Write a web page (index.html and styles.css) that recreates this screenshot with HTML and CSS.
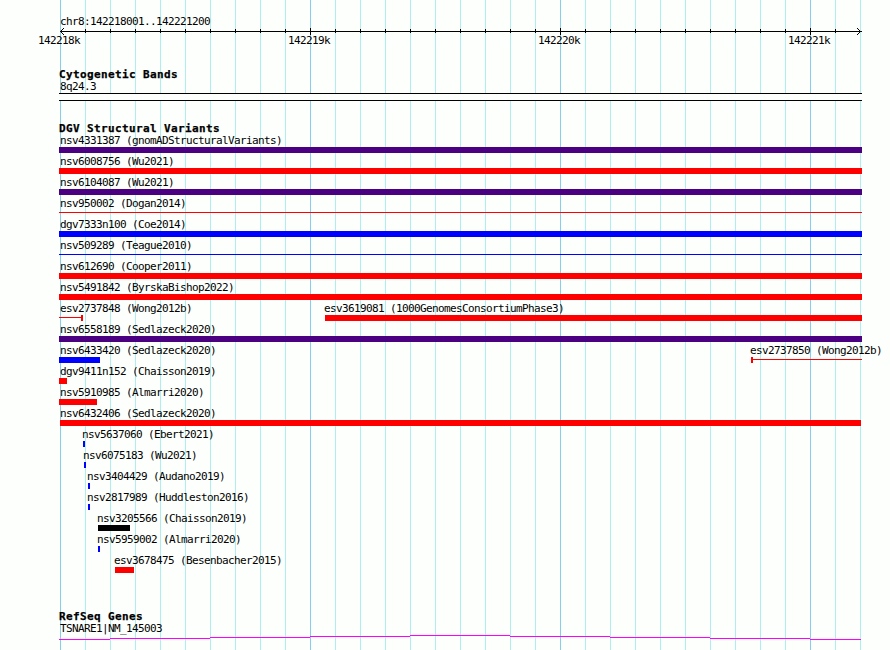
FILE: index.html
```
<!DOCTYPE html>
<html lang="en">
<head>
<meta charset="utf-8">
<title>chr8:142218001..142221200</title>
<link rel="stylesheet" href="styles.css">
</head>
<body>
<main class="browser">
  <section class="ruler">
    <h1 class="region">chr8:142218001..142221200</h1>
    <svg class="axis" id="axis" width="803" height="7" shape-rendering="crispEdges" aria-hidden="true"></svg>
    <div class="scale"><span>142218k</span><span>142219k</span><span>142220k</span><span>142221k</span></div>
  </section>
  <section class="cyto">
    <h2>Cytogenetic Bands</h2>
    <p class="label">8q24.3</p>
    <div class="band"></div>
  </section>
  <section class="variants">
    <h2>DGV Structural Variants</h2>
    <div id="rows"></div>
  </section>
  <section class="genes">
    <h2>RefSeq Genes</h2>
    <p class="label">TSNARE1|NM_145003</p>
    <svg class="gene" width="803" height="5" shape-rendering="crispEdges" aria-hidden="true">
      <path fill="#f0f" d="M0 4h51v1H0zM51 3h100v1H51zM151 2h100v1H151zM251 1h100v1H251zM351 0h100v1H351zM451 1h100v1H451zM551 2h100v1H551zM651 3h100v1H651zM751 4h51v1H751z"/>
    </svg>
  </section>
</main>
<script src="tracks.js"></script>
</body>
</html>
```
FILE: styles.css
```
* { box-sizing: border-box; }
body {
  margin: 0;
  overflow: hidden;
  background: #fdfffc;
  color: #000;
  font: 11px/12px "DejaVu Sans Mono", monospace;
  letter-spacing: -0.622px;
}
.browser {
  width: 801px;
  height: 650px;
  margin-left: 60px;
  padding-top: 16px;
  background:
    linear-gradient(to right, #87ceeb 1px, transparent 1px) 0 0 / 250px 100%,
    linear-gradient(to right, #afeeee 1px, transparent 1px) 0 0 / 25px 100%;
}
section { margin-left: -1px; }
h1, h2, p { margin: 0; font-size: 11px; line-height: 12px; white-space: nowrap; }
h1 { font-weight: 400; padding-left: 1px; height: 12px; }
h2 { font-weight: 700; letter-spacing: 0.378px; -webkit-text-stroke: 0.25px #000; }
.label { padding-left: 1px; }
.ruler { height: 53px; }
.axis { display: block; }
.scale { display: flex; gap: 208px; margin-left: -21px; }
.scale span { width: 42px; flex: none; white-space: nowrap; }
.cyto { height: 53px; }
.band {
  width: 803px;
  height: 8px;
  border: solid #000;
  border-width: 1px 0;
  background: #fdfffc;
}
.variants { height: 489px; padding-top: 1px; }
.row { display: grid; height: 21px; }
.feature { grid-area: 1 / 1; }
.name { display: block; height: 12px; white-space: nowrap; }
.name.edge { padding-left: 1px; }
.name.inner { margin-left: -1px; }
.bar { height: 6px; background: currentColor; }
.bar.line { height: 1px; margin-top: 2px; }
.bar.start, .bar.end {
  background: linear-gradient(currentColor, currentColor) 0 2px / 100% 1px no-repeat;
}
.bar.start { border-left: 2px solid; }
.bar.end { border-right: 2px solid; }
.red { color: #f00; }
.blue { color: #00f; }
.indigo { color: #4b0082; }
.black { color: #000; }
.gene { display: block; }
```
FILE: tracks.js
```
// Each row lists features as [name, start, end, colour, shape]
const rows = [
  [["nsv4331387 (gnomADStructuralVariants)", 59, 862, "indigo"]],
  [["nsv6008756 (Wu2021)", 59, 862, "red"]],
  [["nsv6104087 (Wu2021)", 59, 862, "indigo"]],
  [["nsv950002 (Dogan2014)", 59, 862, "red", "line"]],
  [["dgv7333n100 (Coe2014)", 59, 862, "blue"]],
  [["nsv509289 (Teague2010)", 59, 862, "blue", "line"]],
  [["nsv612690 (Cooper2011)", 59, 862, "red"]],
  [["nsv5491842 (ByrskaBishop2022)", 59, 862, "red"]],
  [["esv2737848 (Wong2012b)", 59, 83, "red", "end"],
   ["esv3619081 (1000GenomesConsortiumPhase3)", 325, 862, "red"]],
  [["nsv6558189 (Sedlazeck2020)", 59, 862, "indigo"]],
  [["nsv6433420 (Sedlazeck2020)", 59, 100, "blue"],
   ["esv2737850 (Wong2012b)", 751, 862, "red", "start"]],
  [["dgv9411n152 (Chaisson2019)", 59, 67, "red"]],
  [["nsv5910985 (Almarri2020)", 59, 97, "red"]],
  [["nsv6432406 (Sedlazeck2020)", 60, 861, "red"]],
  [["nsv5637060 (Ebert2021)", 83, 85, "blue"]],
  [["nsv6075183 (Wu2021)", 84, 86, "blue"]],
  [["nsv3404429 (Audano2019)", 88, 90, "blue"]],
  [["nsv2817989 (Huddleston2016)", 88, 90, "blue"]],
  [["nsv3205566 (Chaisson2019)", 98, 130, "black"]],
  [["nsv5959002 (Almarri2020)", 98, 100, "blue"]],
  [["esv3678475 (Besenbacher2015)", 115, 134, "red"]]
];
const side = x => x === 59 ? "edge" : x === 60 ? "" : "inner";
document.getElementById("rows").innerHTML = rows.map(row =>
  `<div class="row">${row.map(([name, start, end, colour, shape = ""]) =>
    `<div class="feature" style="margin-left:${start - 59}px">
      <span class="name ${side(start)}">${name}</span>
      <div class="bar ${colour} ${shape}" style="width:${end - start}px"></div>
    </div>`).join("")}</div>`).join("");

// Axis line, arrowheads and ticks
let d = "M1 3h802v1H1z";
for (let i = 1; i < 32; i++) {
  const x = 1 + i * 25;
  d += i % 10 ? `M${x} 1h1v4h-1z` : `M${x} 0h1v7h-1z`;
}
for (let i = 1; i <= 3; i++) {
  d += `M${1 + i} ${3 - i}h1v1h-1zM${1 + i} ${3 + i}h1v1h-1z`;
  d += `M${801 - i} ${3 - i}h1v1h-1zM${801 - i} ${3 + i}h1v1h-1z`;
}
document.getElementById("axis").innerHTML = `<path d="${d}"/>`;
```
